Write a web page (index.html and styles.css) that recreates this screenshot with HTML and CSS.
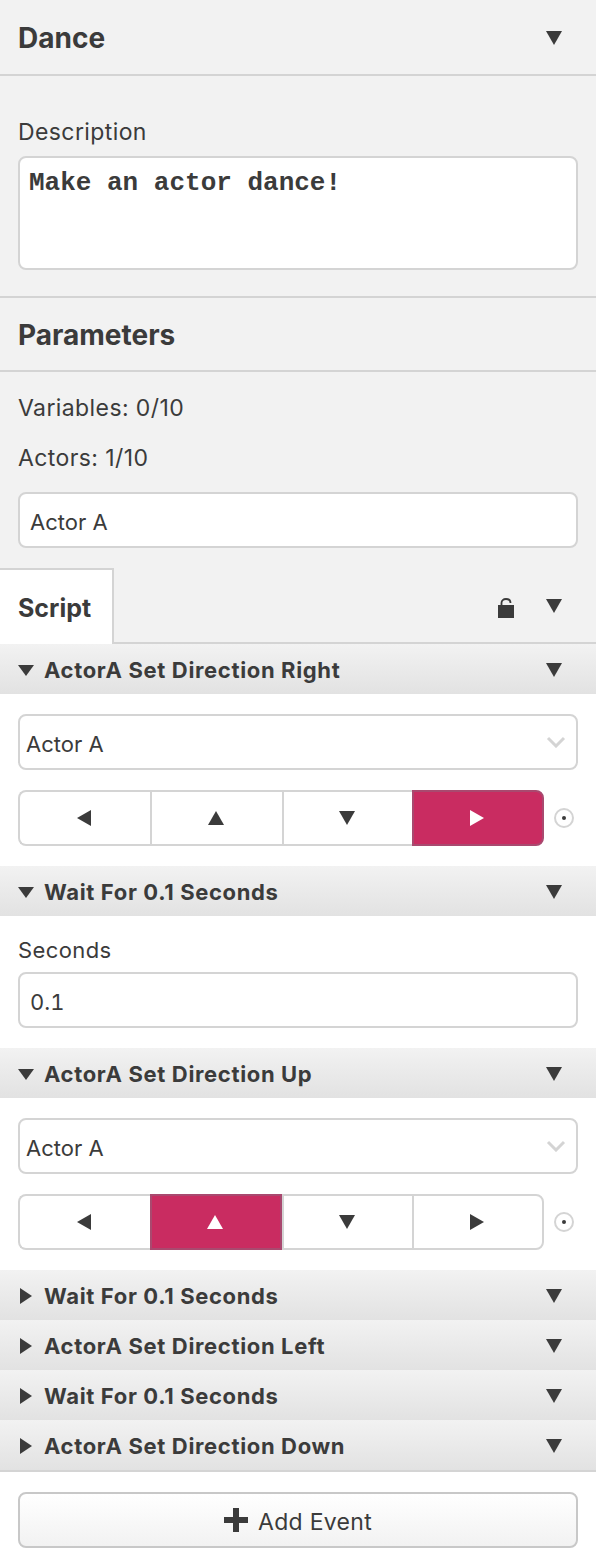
FILE: index.html
```html
<!DOCTYPE html>
<html lang="en">

<head>
    <meta charset="UTF-8">
    <meta name="viewport" content="width=device-width, initial-scale=1.0">
    <title>Dance</title>
    <link rel="stylesheet" href="styles.css">
</head>

<body>
    <svg class="sprites" width="0" height="0">
        <symbol id="tri-down" viewBox="0 0 16 14" preserveAspectRatio="none"><path d="M0 0H16L8 14Z"/></symbol>
        <symbol id="tri-up" viewBox="0 0 16 14" preserveAspectRatio="none"><path d="M0 14H16L8 0Z"/></symbol>
        <symbol id="tri-left" viewBox="0 0 14 16" preserveAspectRatio="none"><path d="M14 0V16L0 8Z"/></symbol>
        <symbol id="tri-right" viewBox="0 0 14 16" preserveAspectRatio="none"><path d="M0 0V16L14 8Z"/></symbol>
    </svg>

    <div class="section-head">
        <h2>Dance</h2>
        <svg class="tri menu"><use href="#tri-down"/></svg>
    </div>

    <div class="section section-desc">
        <label class="label">Description</label>
        <div class="textarea">Make an actor dance!</div>
    </div>

    <div class="section-head section-head-small">
        <h2>Parameters</h2>
    </div>

    <div class="section section-params">
        <div class="label">Variables: 0/10</div>
        <div class="label">Actors: 1/10</div>
        <div class="input">Actor A</div>
    </div>

    <div class="tabs">
        <div class="tab">Script</div>
        <svg class="lock" viewBox="0 0 16 20"><path d="M0 7H16V20H0Z"/><path d="M3.5 8V5C3.5 2.5 5.3 1 8 1S12.5 2.5 12.5 5" fill="none" stroke="#3b3b3b" stroke-width="1.8"/></svg>
        <svg class="tri menu"><use href="#tri-down"/></svg>
    </div>

    <div class="event-head">
        <svg class="tri fold"><use href="#tri-down"/></svg>
        <span>ActorA Set Direction Right</span>
        <svg class="tri menu"><use href="#tri-down"/></svg>
    </div>
    <div class="event-body">
        <div class="select">
            <span>Actor A</span>
            <svg class="chevron" viewBox="0 0 20 12"><path d="M2 2L10 10L18 2" fill="none" stroke="#d4d4d4" stroke-width="3"/></svg>
        </div>
        <div class="direction">
            <div class="btn-group">
                <div class="dir-btn"><svg class="tri-h"><use href="#tri-left"/></svg></div>
                <div class="dir-btn"><svg class="tri"><use href="#tri-up"/></svg></div>
                <div class="dir-btn"><svg class="tri"><use href="#tri-down"/></svg></div>
                <div class="dir-btn active"><svg class="tri-h"><use href="#tri-right"/></svg></div>
            </div>
            <div class="connect"></div>
        </div>
    </div>

    <div class="event-head">
        <svg class="tri fold"><use href="#tri-down"/></svg>
        <span>Wait For 0.1 Seconds</span>
        <svg class="tri menu"><use href="#tri-down"/></svg>
    </div>
    <div class="event-body event-body-wait">
        <div class="label">Seconds</div>
        <div class="input">0.1</div>
    </div>

    <div class="event-head">
        <svg class="tri fold"><use href="#tri-down"/></svg>
        <span>ActorA Set Direction Up</span>
        <svg class="tri menu"><use href="#tri-down"/></svg>
    </div>
    <div class="event-body">
        <div class="select">
            <span>Actor A</span>
            <svg class="chevron" viewBox="0 0 20 12"><path d="M2 2L10 10L18 2" fill="none" stroke="#d4d4d4" stroke-width="3"/></svg>
        </div>
        <div class="direction">
            <div class="btn-group">
                <div class="dir-btn"><svg class="tri-h"><use href="#tri-left"/></svg></div>
                <div class="dir-btn active"><svg class="tri"><use href="#tri-up"/></svg></div>
                <div class="dir-btn"><svg class="tri"><use href="#tri-down"/></svg></div>
                <div class="dir-btn"><svg class="tri-h"><use href="#tri-right"/></svg></div>
            </div>
            <div class="connect"></div>
        </div>
    </div>

    <div class="event-head">
        <svg class="tri-h fold"><use href="#tri-right"/></svg>
        <span>Wait For 0.1 Seconds</span>
        <svg class="tri menu"><use href="#tri-down"/></svg>
    </div>
    <div class="event-head">
        <svg class="tri-h fold"><use href="#tri-right"/></svg>
        <span>ActorA Set Direction Left</span>
        <svg class="tri menu"><use href="#tri-down"/></svg>
    </div>
    <div class="event-head">
        <svg class="tri-h fold"><use href="#tri-right"/></svg>
        <span>Wait For 0.1 Seconds</span>
        <svg class="tri menu"><use href="#tri-down"/></svg>
    </div>
    <div class="event-head event-head-last">
        <svg class="tri-h fold"><use href="#tri-right"/></svg>
        <span>ActorA Set Direction Down</span>
        <svg class="tri menu"><use href="#tri-down"/></svg>
    </div>

    <div class="add-wrap">
        <button class="add-btn">
            <svg class="plus" viewBox="0 0 24 24"><path d="M9 0H15V9H24V15H15V24H9V15H0V9H9Z"/></svg>
            <span>Add Event</span>
        </button>
    </div>
</body>

</html>
```

FILE: styles.css
```css
body {
    font-family: 'Inter', 'Liberation Sans', sans-serif;
    margin: 0;
    padding: 0;
    background-color: #fff;
    color: #3b3b3b;
    font-size: 23px;
}

.sprites {
    position: absolute;
}

svg {
    fill: #3b3b3b;
    flex-shrink: 0;
}

.tri {
    width: 16px;
    height: 14px;
}

.tri-h {
    width: 14px;
    height: 16px;
}

.section-head {
    box-sizing: border-box;
    display: flex;
    align-items: center;
    justify-content: space-between;
    height: 76px;
    padding: 2px 34px 0 18px;
    background-color: #f2f2f2;
    border-bottom: 2px solid #d4d4d4;
}

.section-head-small {
    height: 74px;
}

h2 {
    margin: 0;
    font-size: 28px;
    font-weight: 700;
}

.section {
    background-color: #f2f2f2;
    padding: 0 18px;
}

.section-desc {
    box-sizing: border-box;
    height: 222px;
    padding-top: 42px;
    border-bottom: 2px solid #d4d4d4;
}

.label {
    display: block;
    line-height: 28px;
    letter-spacing: 0.4px;
}

.textarea {
    box-sizing: border-box;
    height: 114px;
    margin-top: 10px;
    padding: 10px 9px;
    background-color: #fff;
    border: 2px solid #d4d4d4;
    border-radius: 8px;
    font-family: 'Liberation Mono', monospace;
    font-weight: 700;
    font-size: 26px;
    line-height: 30px;
    letter-spacing: 0;
}

.section-params {
    height: 196px;
    box-sizing: border-box;
    padding-top: 22px;
}

.section-params .label + .label {
    margin-top: 22px;
}

.input,
.select {
    box-sizing: border-box;
    display: flex;
    align-items: center;
    height: 56px;
    padding-top: 4px;
    font-size: 22px;
    background-color: #fff;
    border: 2px solid #d4d4d4;
    border-radius: 8px;
}

.input {
    padding-left: 10px;
}

.section-params .input {
    margin-top: 20px;
}

.select {
    justify-content: space-between;
    padding-left: 6px;
    padding-right: 10px;
}

.chevron {
    width: 20px;
    height: 12px;
    margin-bottom: 4px;
}

.tabs {
    box-sizing: border-box;
    display: flex;
    align-items: center;
    height: 76px;
    padding: 2px 34px 0 0;
    background-color: #f2f2f2;
    border-bottom: 2px solid #d4d4d4;
}

.tab {
    box-sizing: border-box;
    align-self: flex-end;
    width: 114px;
    height: 76px;
    margin-bottom: -2px;
    padding: 0 0 0 18px;
    line-height: 76px;
    font-size: 25px;
    font-weight: 700;
    background-color: #fff;
    border-top: 2px solid #d4d4d4;
    border-right: 2px solid #d4d4d4;
}

.lock {
    width: 16px;
    height: 20px;
    margin-left: auto;
    margin-right: 32px;
    margin-top: 4px;
}

.event-head {
    box-sizing: border-box;
    display: flex;
    align-items: center;
    height: 50px;
    padding: 2px 34px 0 18px;
    background: linear-gradient(#f2f2f2, #e2e2e2);
    font-size: 22px;
    font-weight: 700;
    letter-spacing: 0.65px;
}

.event-head span {
    margin-left: 10px;
}

.event-head .menu {
    margin-left: auto;
}

.event-head .tri.fold {
    height: 11px;
}

.event-head .tri-h.fold {
    width: 12px;
    margin: 0 2px;
}

.event-head-last {
    height: 52px;
    border-bottom: 2px solid #d4d4d4;
}

.event-body {
    padding: 20px 18px;
}

.event-body-wait {
    height: 92px;
}

.event-body-wait .label {
    font-size: 22px;
}

.event-body-wait .input {
    margin-top: 8px;
    font-variant-numeric: tabular-nums;
}

.direction {
    display: flex;
    align-items: center;
    margin-top: 20px;
    padding-right: 4px;
}

.btn-group {
    display: flex;
    height: 56px;
}

.dir-btn {
    display: flex;
    align-items: center;
    justify-content: center;
    box-sizing: border-box;
    width: 132px;
    border: 2px solid #d4d4d4;
    border-right: 0;
    background-color: #fff;
}

.dir-btn:nth-child(3) {
    width: 130px;
}

.dir-btn svg {
    margin-right: 2px;
}

.dir-btn:first-child {
    border-radius: 8px 0 0 8px;
}

.dir-btn:last-child {
    border-right: 2px solid #d4d4d4;
    border-radius: 0 8px 8px 0;
}

.dir-btn.active {
    background-color: #c92c61;
    border: 2px solid #a9496f;
}

.dir-btn.active svg {
    fill: #fff;
}

.connect {
    position: relative;
    box-sizing: border-box;
    width: 20px;
    height: 20px;
    margin-left: 10px;
    border: 2px solid #d4d4d4;
    border-radius: 50%;
}

.connect::after {
    content: "";
    position: absolute;
    left: 6px;
    top: 6px;
    width: 4px;
    height: 4px;
    border-radius: 50%;
    background-color: #3b3b3b;
}

.add-wrap {
    padding: 20px 18px;
}

.add-btn {
    display: flex;
    align-items: center;
    justify-content: center;
    gap: 10px;
    width: 100%;
    height: 56px;
    padding: 0;
    font-family: inherit;
    font-size: 23px;
    letter-spacing: 0.3px;
    color: #3b3b3b;
    background: linear-gradient(#fff, #f2f2f2);
    border: 2px solid #c8c8c8;
    border-radius: 8px;
}

.add-btn span {
    padding-top: 3px;
}

.plus {
    width: 24px;
    height: 24px;
}
```
